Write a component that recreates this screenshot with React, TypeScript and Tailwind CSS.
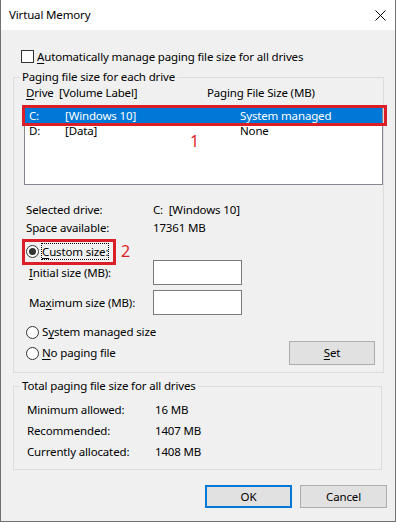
import type { ReactNode } from "react";

function U({ children }: { children: ReactNode }) {
  return <span className="underline underline-offset-[2px] decoration-[1px]">{children}</span>;
}

function Radio({ checked }: { checked?: boolean }) {
  return (
    <span className="flex h-[13px] w-[13px] shrink-0 items-center justify-center rounded-full border border-[#333] bg-white">
      {checked ? <span className="h-[7px] w-[7px] rounded-full bg-[#333]" /> : null}
    </span>
  );
}

const rows = [
  { drive: "C:", label: "[Windows 10]", size: "System managed", selected: true },
  { drive: "D:", label: "[Data]", size: "None", selected: false },
];

const totals = [
  ["Minimum allowed:", "16 MB"],
  ["Recommended:", "1407 MB"],
  ["Currently allocated:", "1408 MB"],
];

export default function App() {
  return (
    <div className="flex h-[522px] w-[396px] flex-col border-x border-b border-[#707070] bg-[#f0f0f0] font-['Noto_Sans',sans-serif] text-[11.5px] tracking-[-0.15px] text-black">
      <div className="flex h-[30px] shrink-0 items-center justify-between bg-white pl-[8px] pr-[9px]">
        <span>Virtual Memory</span>
        <svg width="11" height="11" viewBox="0 0 11 11">
          <path d="M0.5 0.5 L10.5 10.5 M10.5 0.5 L0.5 10.5" stroke="#000" strokeWidth="1" />
        </svg>
      </div>

      <div className="ml-[20px] mt-[20px] flex h-[13px] items-center gap-[3px]">
        <span className="h-[13px] w-[13px] border border-[#333] bg-white" />
        <span className="leading-[16px]">
          <U>A</U>utomatically manage paging file size for all drives
        </span>
      </div>

      <fieldset className="ml-[12px] mt-[6px] w-[369px] border border-[#dcdcdc] p-0">
        <legend className="ml-[6px] px-[2px] leading-[16px]">Paging file size for each drive</legend>
        <div className="ml-[12px] flex leading-[16px]">
          <span className="w-[33px]">
            <U>D</U>rive
          </span>
          <span className="w-[148px]">[Volume Label]</span>
          <span>Paging File Size (MB)</span>
        </div>
        <div className="relative ml-[10px] mt-[4px] h-[80px] w-[359px] border border-[#828790] bg-white pt-[2px]">
          {rows.map((row) => (
            <div
              key={row.drive}
              className={`flex h-[15px] pl-[4px] leading-[15px] ${row.selected ? "bg-[#0078d7] text-white" : ""}`}
            >
              <span className="w-[36px]">{row.drive}</span>
              <span className="w-[175px]">{row.label}</span>
              <span>{row.size}</span>
            </div>
          ))}
          <span className="absolute left-[-3px] top-[-1px] h-[21px] w-[365px] border-[3px] border-[#dc1f26]" />
          <span className="absolute left-[165px] top-[25px] text-[16px] leading-[20px] text-[#dc1f26]">1</span>
        </div>

        <div className="ml-[12px] mt-[16px] leading-[18px]">
          <div className="flex">
            <span className="w-[127px]">Selected drive:</span>
            <span>C:&nbsp; [Windows 10]</span>
          </div>
          <div className="flex">
            <span className="w-[127px]">Space available:</span>
            <span>17361 MB</span>
          </div>
        </div>

        <div className="relative ml-[12px] mt-[6px] flex h-[17px] items-center">
          <Radio checked />
          <span className="ml-[2px] border border-dotted border-black leading-[15px]">
            <U>C</U>ustom size:
          </span>
          <span className="absolute left-[-4px] top-[-4px] h-[26px] w-[94px] border-[3px] border-[#dc1f26]" />
          <span className="absolute left-[95px] top-[-2px] text-[16px] leading-[20px] text-[#dc1f26]">2</span>
        </div>

        <div className="ml-[15px] flex h-[25px] items-center">
          <span className="w-[124px]">
            <U>I</U>nitial size (MB):
          </span>
          <span className="h-[25px] w-[89px] border border-[#7a7a7a] bg-white" />
        </div>
        <div className="ml-[15px] mt-[5px] flex h-[25px] items-center">
          <span className="w-[124px]">
            Ma<U>x</U>imum size (MB):
          </span>
          <span className="h-[25px] w-[89px] border border-[#7a7a7a] bg-white" />
        </div>

        <div className="mb-[7px] mr-[8px] mt-[8px] flex items-start justify-between">
          <div className="ml-[12px] flex flex-col gap-[3px]">
            <div className="flex h-[18px] items-center gap-[3px]">
              <Radio />
              <span>
                S<U>y</U>stem managed size
              </span>
            </div>
            <div className="flex h-[18px] items-center gap-[3px]">
              <Radio />
              <span>
                <U>N</U>o paging file
              </span>
            </div>
          </div>
          <button className="mt-[18px] flex h-[24px] w-[86px] items-center justify-center border border-[#adadad] bg-[#e1e1e1]">
            <span>
              <U>S</U>et
            </span>
          </button>
        </div>
      </fieldset>

      <fieldset className="ml-[12px] mt-[5px] w-[369px] border border-[#dcdcdc] p-0 pb-[7px]">
        <legend className="ml-[6px] px-[2px] leading-[16px]">Total paging file size for all drives</legend>
        <div className="ml-[13px] mt-[5px] leading-[21px]">
          {totals.map(([label, value]) => (
            <div key={label} className="flex">
              <span className="w-[128px]">{label}</span>
              <span>{value}</span>
            </div>
          ))}
        </div>
      </fieldset>

      <div className="mt-[15px] flex justify-end gap-[8px] pr-[8px]">
        <button className="flex h-[23px] w-[87px] items-center justify-center border-2 border-[#0078d7] bg-[#e1e1e1]">
          OK
        </button>
        <button className="flex h-[23px] w-[87px] items-center justify-center border border-[#adadad] bg-[#e1e1e1]">
          Cancel
        </button>
      </div>
    </div>
  );
}
